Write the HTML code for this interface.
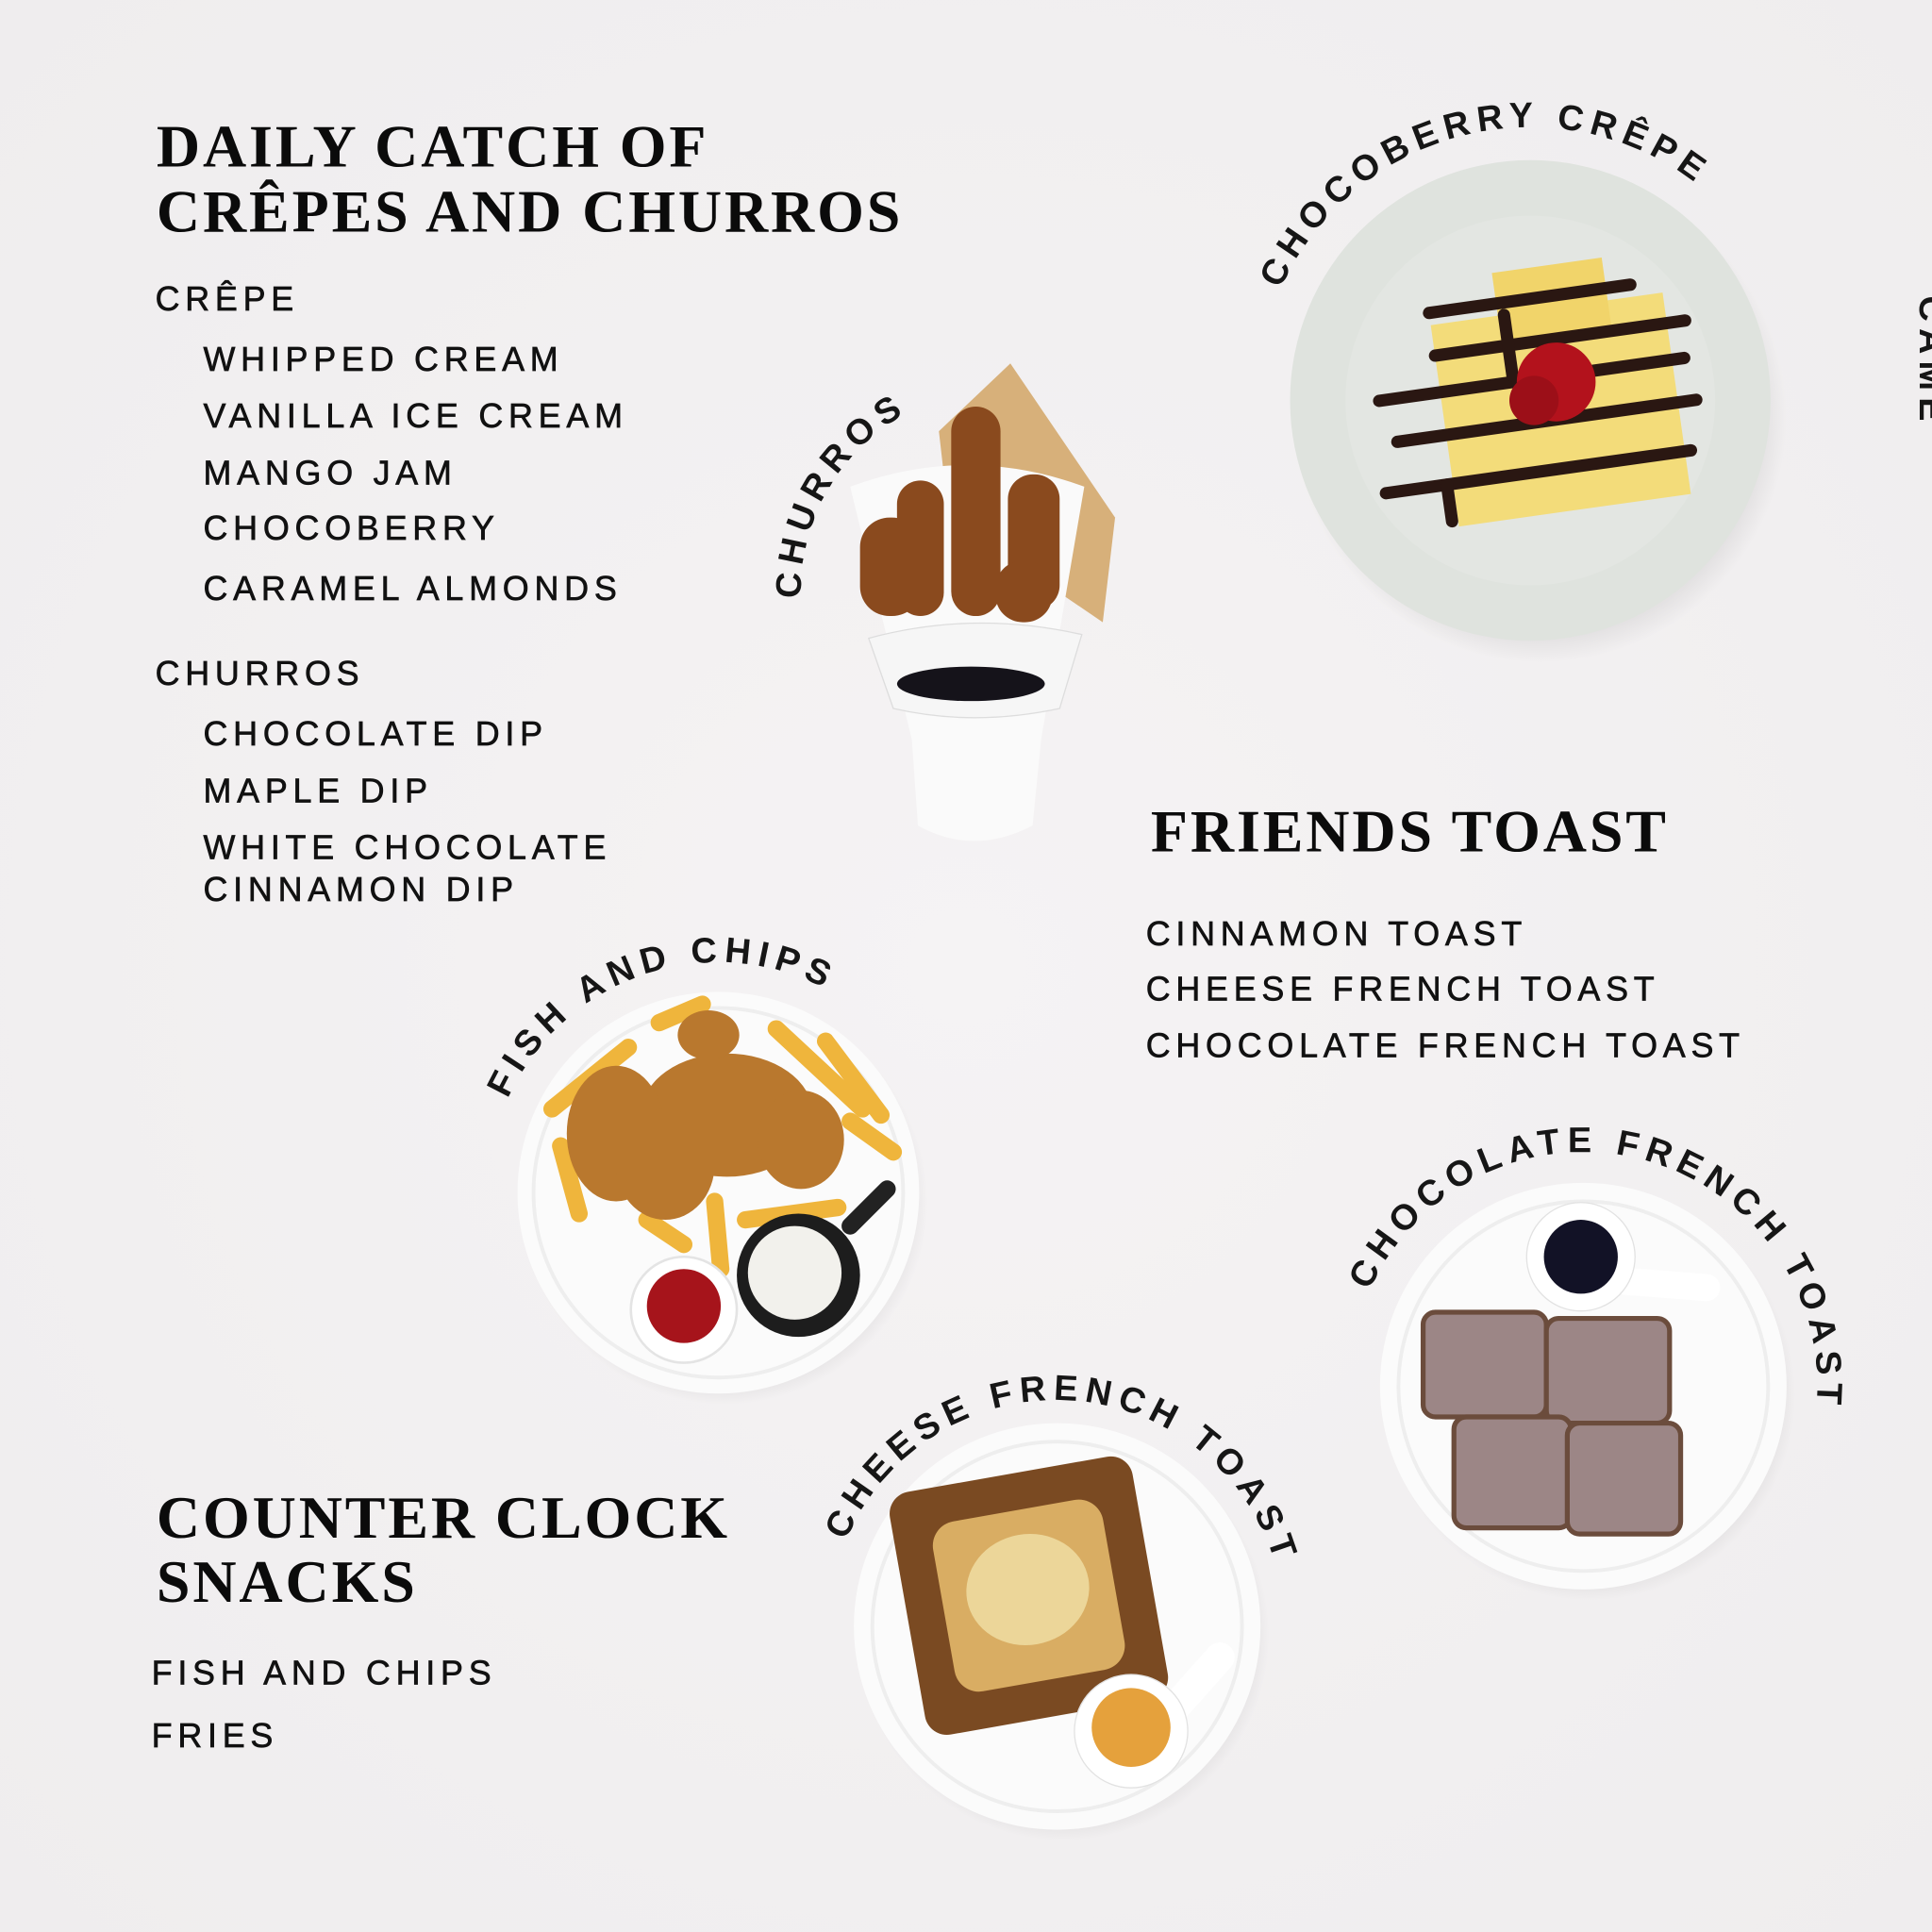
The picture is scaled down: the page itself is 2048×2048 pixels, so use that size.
<!DOCTYPE html>
<html><head><meta charset="utf-8"><style>
html,body{margin:0;padding:0;background:#f3f1f2;}
svg{display:block}
.h{font-family:"Liberation Serif",serif;font-weight:bold;font-size:49px;letter-spacing:2.2px;fill:#0b0b0b}
.s{font-family:"Liberation Sans",sans-serif;font-size:27.5px;letter-spacing:4.4px;fill:#111;stroke:#111;stroke-width:0.5}
.a{font-family:"Liberation Sans",sans-serif;font-weight:bold;font-size:29px;letter-spacing:5.5px;fill:#161616}
</style></head><body>
<svg width="2048" height="2048" viewBox="0 0 1568 1568" xmlns="http://www.w3.org/2000/svg">
<defs>
<radialGradient id="bg" cx="0.5" cy="0.5" r="0.7"><stop offset="0" stop-color="#f5f3f4"/><stop offset="1" stop-color="#efedee"/></radialGradient>
<radialGradient id="sh" cx="0.5" cy="0.5" r="0.5"><stop offset="0.8" stop-color="#000" stop-opacity="0.12"/><stop offset="1" stop-color="#000" stop-opacity="0"/></radialGradient>
<path id="p1" d="M1039.2,234.7 A222,222 0 0 1 1434,214"/>
<path id="p2" d="M650.1,485.8 A165,165 0 0 1 815,315"/>
<path id="p3" d="M412.2,891.9 A187,187 0 0 1 745,874.5"/>
<path id="p4" d="M1111.4,1047.7 A190,190 0 0 1 1463.5,1190"/>
<path id="p5" d="M686.5,1250.7 A185,185 0 0 1 1031.8,1383.3"/>
</defs>
<rect width="1568" height="1568" fill="url(#bg)"/>

<text class="h" x="127" y="135">DAILY CATCH OF</text>
<text class="h" x="127" y="188">CRÊPES AND CHURROS</text>
<text class="s" x="126" y="252">CRÊPE</text>
<text class="s" x="165" y="301">WHIPPED CREAM</text>
<text class="s" x="165" y="347">VANILLA ICE CREAM</text>
<text class="s" x="165" y="393">MANGO JAM</text>
<text class="s" x="165" y="438">CHOCOBERRY</text>
<text class="s" x="165" y="487">CARAMEL ALMONDS</text>
<text class="s" x="126" y="556">CHURROS</text>
<text class="s" x="165" y="605">CHOCOLATE DIP</text>
<text class="s" x="165" y="651">MAPLE DIP</text>
<text class="s" x="165" y="697">WHITE CHOCOLATE</text>
<text class="s" x="165" y="731">CINNAMON DIP</text>
<text class="h" x="934" y="691">FRIENDS TOAST</text>
<text class="s" x="930" y="767">CINNAMON TOAST</text>
<text class="s" x="930" y="812">CHEESE FRENCH TOAST</text>
<text class="s" x="930" y="858">CHOCOLATE FRENCH TOAST</text>
<text class="h" x="127" y="1248">COUNTER CLOCK</text>
<text class="h" x="127" y="1300">SNACKS</text>
<text class="s" x="123" y="1367">FISH AND CHIPS</text>
<text class="s" x="123" y="1418">FRIES</text>
<text class="a" transform="translate(1558,240) rotate(90)">CAME</text>

<circle cx="1250" cy="338" r="200" fill="url(#sh)"/>
<circle cx="1242" cy="325" r="195" fill="#dfe3de"/>
<circle cx="1242" cy="325" r="150" fill="#e3e6e2"/>
<g transform="rotate(-8 1265 320)">
<rect x="1170" y="250" width="190" height="165" fill="#f3dc7a"/>
<rect x="1225" y="215" width="90" height="60" fill="#f1d46a"/>
<g stroke="#2a1712" stroke-width="10" stroke-linecap="round" fill="none">
<path d="M1170,240 H1335"/><path d="M1170,275 H1375"/><path d="M1120,305 H1370"/>
<path d="M1130,340 H1375"/><path d="M1115,380 H1365"/><path d="M1165,410 V380"/><path d="M1230,250 V300"/>
</g>
</g>
<circle cx="1263" cy="310" r="32" fill="#b3121c"/><circle cx="1245" cy="325" r="20" fill="#9c0f18"/>

<polygon points="762,350 820,295 905,420 895,505 770,420" fill="#d7b07a"/>
<path d="M690,395 Q785,360 880,395 L845,600 L838,670 Q790,695 745,670 L740,600 Z" fill="#fafafa"/>
<g fill="#8a4a1e">
<rect x="698" y="420" width="50" height="80" rx="24"/>
<rect x="772" y="330" width="40" height="170" rx="20"/>
<rect x="728" y="390" width="38" height="110" rx="19"/>
<rect x="818" y="385" width="42" height="110" rx="20"/>
<rect x="808" y="455" width="46" height="50" rx="22"/>
</g>
<path d="M705,518 Q790,495 878,515 L860,575 Q790,590 725,575 Z" fill="#f6f6f6" stroke="#ddd"/>
<ellipse cx="788" cy="555" rx="60" ry="14" fill="#15131a"/>

<circle cx="588" cy="975" r="165" fill="url(#sh)"/>
<circle cx="583" cy="968" r="163" fill="#fbfbfb"/>
<circle cx="583" cy="968" r="150" fill="none" stroke="#eee" stroke-width="3"/>
<g stroke="#efb53c" stroke-width="14" stroke-linecap="round">
<path d="M448,900 L510,850"/><path d="M455,930 L470,985"/><path d="M630,835 L700,900"/>
<path d="M670,845 L715,905"/><path d="M690,910 L725,935"/><path d="M605,990 L680,980"/>
<path d="M580,975 L585,1030"/><path d="M525,990 L555,1010"/><path d="M535,830 L570,815"/>
</g>
<g fill="#b9782e">
<ellipse cx="590" cy="905" rx="70" ry="50"/><ellipse cx="500" cy="920" rx="40" ry="55"/>
<ellipse cx="540" cy="945" rx="40" ry="45"/><ellipse cx="650" cy="925" rx="35" ry="40"/>
<ellipse cx="575" cy="840" rx="25" ry="20"/>
</g>
<circle cx="555" cy="1063" r="43" fill="#fff" stroke="#e4e4e4" stroke-width="2"/>
<circle cx="555" cy="1060" r="30" fill="#a6141b"/>
<path d="M690,995 L720,965" stroke="#222" stroke-width="14" stroke-linecap="round"/>
<circle cx="648" cy="1035" r="50" fill="#1d1d1d"/>
<circle cx="645" cy="1033" r="38" fill="#f2f1ec"/>

<circle cx="1290" cy="1132" r="167" fill="url(#sh)"/>
<circle cx="1285" cy="1125" r="165" fill="#fbfbfb"/>
<circle cx="1285" cy="1125" r="150" fill="none" stroke="#eee" stroke-width="3"/>
<path d="M1320,1040 L1385,1045" stroke="#fff" stroke-width="22" stroke-linecap="round"/>
<circle cx="1283" cy="1020" r="44" fill="#fff" stroke="#e2e2e2"/>
<circle cx="1283" cy="1020" r="30" fill="#121226"/>
<g fill="#9c8686" stroke="#6b4c3c" stroke-width="4">
<rect x="1155" y="1065" width="100" height="85" rx="10"/>
<rect x="1255" y="1070" width="100" height="85" rx="10"/>
<rect x="1180" y="1150" width="95" height="90" rx="10"/>
<rect x="1272" y="1155" width="92" height="90" rx="10"/>
</g>

<circle cx="863" cy="1327" r="167" fill="url(#sh)"/>
<circle cx="858" cy="1320" r="165" fill="#fbfbfb"/>
<circle cx="858" cy="1320" r="150" fill="none" stroke="#eee" stroke-width="3"/>
<g transform="rotate(-10 835 1295)">
<rect x="735" y="1195" width="200" height="200" rx="18" fill="#7a4a22"/>
<rect x="765" y="1225" width="140" height="140" rx="20" fill="#d9ad63"/>
<ellipse cx="835" cy="1290" rx="50" ry="45" fill="#ecd699"/>
</g>
<path d="M950,1390 L990,1345" stroke="#fff" stroke-width="24" stroke-linecap="round"/>
<circle cx="918" cy="1405" r="46" fill="#fff" stroke="#e2e2e2"/>
<circle cx="918" cy="1402" r="32" fill="#e5a13c"/>

<text class="a"><textPath href="#p1">CHOCOBERRY CRÊPE</textPath></text>
<text class="a"><textPath href="#p2">CHURROS</textPath></text>
<text class="a"><textPath href="#p3">FISH AND CHIPS</textPath></text>
<text class="a"><textPath href="#p4">CHOCOLATE FRENCH TOAST</textPath></text>
<text class="a"><textPath href="#p5">CHEESE FRENCH TOAST</textPath></text>
</svg>
</body></html>
